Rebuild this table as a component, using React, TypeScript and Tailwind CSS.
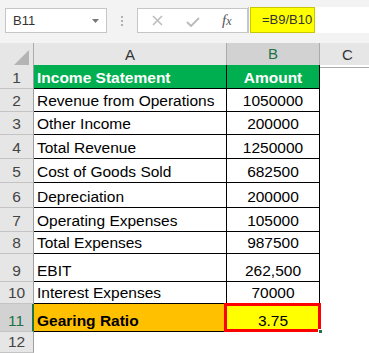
import React from 'react';

interface SheetRow {
  n: number;
  label: string;
  value: string;
  height: string;
}

// rows as they sit in the sheet, heights taken from the screenshot
const rows: SheetRow[] = [
  { n: 2, label: 'Revenue from Operations', value: '1050000', height: 'h-[23px]' },
  { n: 3, label: 'Other Income', value: '200000', height: 'h-[23px]' },
  { n: 4, label: 'Total Revenue', value: '1250000', height: 'h-[24px]' },
  { n: 5, label: 'Cost of Goods Sold', value: '682500', height: 'h-[24px]' },
  { n: 6, label: 'Depreciation', value: '200000', height: 'h-[25px]' },
  { n: 7, label: 'Operating Expenses', value: '105000', height: 'h-[24px]' },
  { n: 8, label: 'Total Expenses', value: '987500', height: 'h-[22px]' },
  { n: 9, label: 'EBIT', value: '262,500', height: 'h-[28px]' },
  { n: 10, label: 'Interest Expenses', value: '70000', height: 'h-[22px]' },
];

const RowNum: React.FC<{ n: number; active?: boolean }> = ({ n, active }) => (
  <div
    className={`flex items-end justify-center pb-[1px] border-b border-[#c4c4c4] ${
      active
        ? 'bg-[#d2d2d2] text-[#217346] border-r-2 border-r-[#217346]'
        : 'bg-[#e6e6e6] text-[#444] border-r border-r-[#9e9e9e]'
    }`}
  >
    {n}
  </div>
);

const Toolbar: React.FC = () => (
  <div className="h-[43px] bg-[#f3f3f3] flex items-start pt-[8px] pl-[5px] text-[13px]">
    <div className="w-[102px] h-[25px] bg-white border border-[#c6c6c6] flex items-center justify-between pl-[7px] pr-[7px] text-[#333]">
      <span>B11</span>
      <svg width="7" height="4" viewBox="0 0 7 4">
        <path d="M0 0 L7 0 L3.5 4 Z" fill="#777" />
      </svg>
    </div>
    <div className="w-[30px] h-[25px] flex flex-col items-center justify-center gap-[2px]">
      <span className="w-[2px] h-[2px] bg-[#b0b0b0]" />
      <span className="w-[2px] h-[2px] bg-[#b0b0b0]" />
      <span className="w-[2px] h-[2px] bg-[#b0b0b0]" />
    </div>
    <div className="w-[111px] h-[25px] bg-white border border-[#c6c6c6] flex items-center">
      <svg className="ml-[14px]" width="11" height="11" viewBox="0 0 11 11">
        <path d="M1 1 L10 10 M10 1 L1 10" stroke="#bdbdbd" strokeWidth="1.6" />
      </svg>
      <svg className="ml-[23px] mt-[3px]" width="14" height="10" viewBox="0 0 14 10">
        <path d="M1 5 L5 9 L13 1" stroke="#bdbdbd" strokeWidth="2" fill="none" />
      </svg>
      <span className="ml-[22px] font-['Liberation_Serif',serif] italic text-[15px] text-[#555] leading-none">
        f<span className="text-[12px]">x</span>
      </span>
    </div>
    <div className="flex-1 h-[26px] -mt-[1px] bg-white border-l border-[#c6c6c6] flex">
      <div className="ml-[1px] w-[65px] h-[26px] bg-[#ffff00] border border-[#c8c800] flex items-center pl-[11px] text-[#333]">
        =B9/B10
      </div>
    </div>
  </div>
);

export default function App() {
  return (
    <div className="w-[369px] h-[353px] overflow-hidden bg-white font-['Liberation_Sans',Arial,sans-serif] text-[15.5px] text-black">
      <Toolbar />

      {/* column headers */}
      <div className="grid grid-cols-[34px_193px_93px_1fr] h-[22px] bg-[#e6e6e6] text-[15px] text-[#333]">
        <div className="flex items-end justify-end pr-[4px] pb-[2px] border-r border-b border-[#ababab]">
          <svg width="15" height="15" viewBox="0 0 15 15">
            <path d="M15 0 L15 15 L0 15 Z" fill="#b4b4b4" />
          </svg>
        </div>
        <div className="flex items-center justify-center border-r border-b border-[#ababab]">A</div>
        <div className="flex items-center justify-center bg-[#d2d2d2] text-[#217346] border-r border-[#ababab] border-b-2 border-b-[#217346]">
          B
        </div>
        <div className="flex items-center pl-[22px] border-b border-[#ababab]">C</div>
      </div>

      {/* row 1 */}
      <div className="grid grid-cols-[34px_193px_93px_1fr] h-[24px] leading-[18px]">
        <RowNum n={1} />
        <div className="bg-[#00b050] text-white font-bold flex items-end pl-[3px] pb-[1px] border-b border-r border-black">
          Income Statement
        </div>
        <div className="bg-[#00b050] text-white font-bold flex items-end justify-center pb-[1px] border-b border-r border-black">
          Amount
        </div>
        <div />
      </div>

      {rows.map((r) => (
        <div key={r.n} className={`grid grid-cols-[34px_193px_93px_1fr] ${r.height} leading-[18px]`}>
          <RowNum n={r.n} />
          <div className="flex items-end pl-[3px] pb-[1px] border-b border-r border-black">{r.label}</div>
          <div className="flex items-end justify-center pb-[1px] border-b border-r border-black">{r.value}</div>
          <div />
        </div>
      ))}

      {/* row 11, selected */}
      <div className="grid grid-cols-[34px_193px_93px_1fr] h-[28px] leading-[18px]">
        <RowNum n={11} active />
        <div className="bg-[#ffc000] font-bold flex items-end pl-[3px] pb-[1px] border-b border-r border-black">
          Gearing Ratio
        </div>
        <div className="relative bg-[#ffff00] flex items-end justify-center pb-[1px] border-b border-r border-black">
          3.75
          <div className="absolute -left-[3px] -top-[1px] -right-[2px] -bottom-[1px] border-[3px] border-[#ff0000]" />
          <div className="absolute -right-[4px] -bottom-[3px] w-[5px] h-[5px] bg-[#217346] border border-white" />
        </div>
        <div />
      </div>

      {/* row 12 */}
      <div className="grid grid-cols-[34px_193px_93px_1fr] h-[21px] leading-[18px]">
        <RowNum n={12} />
        <div />
        <div />
        <div />
      </div>
    </div>
  );
}
